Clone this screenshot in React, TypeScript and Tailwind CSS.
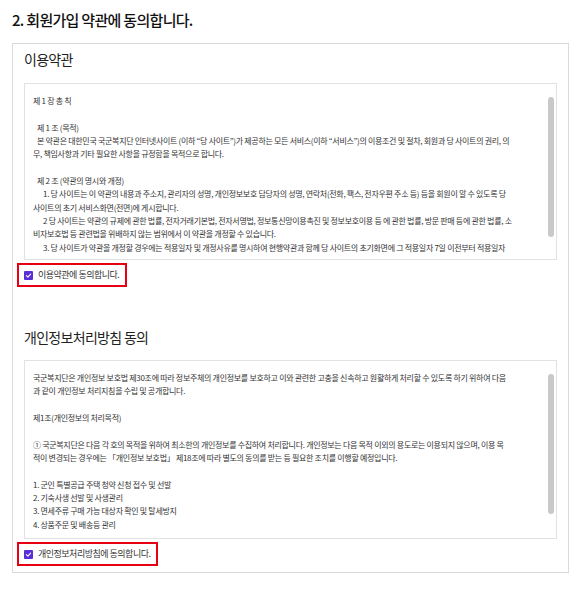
import React from "react";

type Line = { t: string; i?: number };

const terms1: Line[] = [
  { t: "제 1 장 총 칙" },
  { t: "" },
  { t: "제 1 조 (목적)", i: 4 },
  { t: "본 약관은 대한민국 국군복지단 인터넷사이트 (이하 \u201c당 사이트\u201d)가 제공하는 모든 서비스(이하 \u201c서비스\u201d)의 이용조건 및 절차, 회원과 당 사이트의 권리, 의", i: 4 },
  { t: "무, 책임사항과 기타 필요한 사항을 규정함을 목적으로 합니다." },
  { t: "" },
  { t: "제 2 조 (약관의 명시와 개정)", i: 4 },
  { t: "1. 당 사이트는 이 약관의 내용과 주소지, 관리자의 성명, 개인정보보호 담당자의 성명, 연락처(전화, 팩스, 전자우편 주소 등) 등을 회원이 알 수 있도록 당", i: 10 },
  { t: "사이트의 초기 서비스화면(전면)에 게시합니다." },
  { t: "2 당 사이트는 약관의 규제에 관한 법률, 전자거래기본법, 전자서명법, 정보통신망이용촉진 및 정보보호이용 등 에 관한 법률, 방문 판매 등에 관한 법률, 소", i: 10 },
  { t: "비자보호법 등 관련법을 위배하지 않는 범위에서 이 약관을 개정할 수 있습니다." },
  { t: "3. 당 사이트가 약관을 개정할 경우에는 적용일자 및 개정사유를 명시하여 현행약관과 함께 당 사이트의 초기화면에 그 적용일자 7일 이전부터 적용일자", i: 10 },
];

const terms2: Line[] = [
  { t: "국군복지단은 개인정보 보호법 제30조에 따라 정보주체의 개인정보를 보호하고 이와 관련한 고충을 신속하고 원활하게 처리할 수 있도록 하기 위하여 다음" },
  { t: "과 같이 개인정보 처리지침을 수립 및 공개합니다." },
  { t: "" },
  { t: "제1조(개인정보의 처리목적)" },
  { t: "" },
  { t: "① 국군복지단은 다음 각 호의 목적을 위하여 최소한의 개인정보를 수집하여 처리합니다. 개인정보는 다음 목적 이외의 용도로는 이용되지 않으며, 이용 목" },
  { t: "적이 변경되는 경우에는 「개인정보 보호법」 제18조에 따라 별도의 동의를 받는 등 필요한 조치를 이행할 예정입니다." },
  { t: "" },
  { t: "1. 군인 특별공급 주택 청약 신청 접수 및 선발" },
  { t: "2. 기숙사생 선발 및 사생관리" },
  { t: "3. 면세주류 구매 가능 대상자 확인 및 탈세방지" },
  { t: "4. 상품주문 및 배송등 관리" },
];

function TextBox({ lines, h }: { lines: Line[]; h: string }) {
  return (
    <div className={`flex border border-[#e2e2e2] bg-white ${h}`}>
      <div className="flex-1 overflow-hidden pl-[8px] pt-[10px] text-[8px] leading-[13.35px] tracking-[-0.3px] text-[#333]">
        {lines.map((l, k) => (
          <div
            key={k}
            className="whitespace-pre"
            style={l.i ? { paddingLeft: l.i } : undefined}
          >
            {l.t === "" ? "\u00a0" : l.t}
          </div>
        ))}
      </div>
      <div className="mr-[2px] w-[6px] pt-[13px]">
        <div className="h-[140px] w-[6px] rounded-full bg-[#c9c9c9]" />
      </div>
    </div>
  );
}

function Agree({ label }: { label: string }) {
  return (
    <div className="flex">
      <div className="flex h-[24px] items-center gap-[5px] border-2 border-[#e60012] pl-[5px] pr-[6px]">
        <div className="flex h-[9px] w-[9px] items-center justify-center rounded-[1px] bg-[#5a2fd8]">
          <svg width="7" height="7" viewBox="0 0 8 8">
            <path d="M1.6 4.2 L3.3 5.8 L6.4 2.4" fill="none" stroke="#fff" strokeWidth="1.2" strokeLinecap="round" strokeLinejoin="round" />
          </svg>
        </div>
        <span className="text-[9px] leading-[12px] tracking-[-0.5px] text-[#333]">{label}</span>
      </div>
    </div>
  );
}

export default function App() {
  return (
    <div className="h-[590px] w-[579px] bg-white px-[12px] pt-[9px] font-['Noto_Sans_CJK_KR','Noto_Sans',sans-serif]">
      <h2 className="text-[15px] font-medium leading-[21px] tracking-[-0.7px] text-[#111]">
        2. 회원가입 약관에 동의합니다.
      </h2>
      <div className="mt-[13px] w-[557px] border border-[#d9d9d9] pb-[6px] pl-[4px] pr-[11px] pt-[5px]">
        <div className="pl-[7px]">
          <h3 className="text-[14px] leading-[20px] tracking-[-0.7px] text-[#222]">이용약관</h3>
          <div className="mt-[14px]">
            <TextBox lines={terms1} h="h-[177px]" />
          </div>
        </div>
        <div className="mt-[3px]">
          <Agree label="이용약관에 동의합니다." />
        </div>
        <div className="mt-[40px] pl-[7px]">
          <h3 className="text-[14px] leading-[20px] tracking-[-0.7px] text-[#222]">개인정보처리방침 동의</h3>
          <div className="mt-[13px]">
            <TextBox lines={terms2} h="h-[179px]" />
          </div>
        </div>
        <div className="mt-[3px]">
          <Agree label="개인정보처리방침에 동의합니다." />
        </div>
      </div>
    </div>
  );
}
